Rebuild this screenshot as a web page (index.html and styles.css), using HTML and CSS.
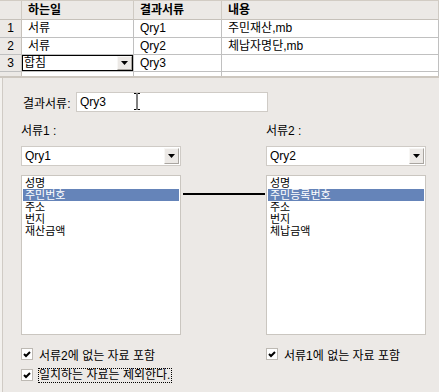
FILE: index.html
```html
<!DOCTYPE html>
<html lang="ko">
<head>
    <meta charset="UTF-8">
    <title>자료 합침</title>
    <link rel="stylesheet" href="styles.css">
</head>
<body>
    <div class="grid">
        <div class="hd"></div>
        <div class="hd">하는일</div>
        <div class="hd">결과서류</div>
        <div class="hd">내용</div>

        <div class="num">1</div>
        <div class="cell">서류</div>
        <div class="cell">Qry1</div>
        <div class="cell">주민재산,mb</div>

        <div class="num">2</div>
        <div class="cell">서류</div>
        <div class="cell">Qry2</div>
        <div class="cell">체납자명단,mb</div>

        <div class="num">3</div>
        <div class="cell edit">
            <div class="edit-box">
                <span class="edit-text">합침</span>
                <span class="drop-btn"><svg width="7" height="4" viewBox="0 0 7 4"><path d="M0 0h7L3.5 4z" fill="#000"/></svg></span>
            </div>
        </div>
        <div class="cell">Qry3</div>
        <div class="cell"></div>

        <div class="num tail"></div>
        <div class="cell tail"></div>
        <div class="cell tail"></div>
        <div class="cell tail"></div>
    </div>

    <div class="panel">
        <div class="result-row">
            <label class="result-label">결과서류:</label>
            <div class="text-box">Qry3</div>
            <!-- 마우스 커서 -->
            <svg class="ibeam" width="8" height="17" viewBox="0 0 8 17">
                <path d="M1 .5h2.5M4.5 .5H7M4 1v15M1 16.5h2.5M4.5 16.5H7" stroke="#000" fill="none"/>
            </svg>
        </div>

        <div class="pair">
            <div class="col-label">서류1 :</div>
            <div></div>
            <div class="col-label">서류2 :</div>

            <div class="combo">
                <span class="combo-text">Qry1</span>
                <span class="drop-btn"><svg width="7" height="4" viewBox="0 0 7 4"><path d="M0 0h7L3.5 4z" fill="#000"/></svg></span>
            </div>
            <div></div>
            <div class="combo">
                <span class="combo-text">Qry2</span>
                <span class="drop-btn"><svg width="7" height="4" viewBox="0 0 7 4"><path d="M0 0h7L3.5 4z" fill="#000"/></svg></span>
            </div>

            <ul class="listbox">
                <li>성명</li>
                <li class="selected">주민번호</li>
                <li>주소</li>
                <li>번지</li>
                <li>재산금액</li>
            </ul>
            <div class="link-line"></div>
            <ul class="listbox">
                <li>성명</li>
                <li class="selected">주민등록번호</li>
                <li>주소</li>
                <li>번지</li>
                <li>체납금액</li>
            </ul>
        </div>

        <div class="checks">
            <div class="check">
                <span class="box"><svg width="8" height="7" viewBox="0 0 8 7"><path d="M1 3l2 2 4-4" stroke="#000" stroke-width="2" fill="none"/></svg></span>
                <span>서류2에 없는 자료 포함</span>
            </div>
            <div></div>
            <div class="check">
                <span class="box"><svg width="8" height="7" viewBox="0 0 8 7"><path d="M1 3l2 2 4-4" stroke="#000" stroke-width="2" fill="none"/></svg></span>
                <span>서류1에 없는 자료 포함</span>
            </div>

            <div class="check">
                <span class="box"><svg width="8" height="7" viewBox="0 0 8 7"><path d="M1 3l2 2 4-4" stroke="#000" stroke-width="2" fill="none"/></svg></span>
                <span class="focused">일치하는 자료는 제외한다.</span>
            </div>
        </div>
    </div>
</body>
</html>
```

FILE: styles.css
```css
* {
    margin: 0;
    padding: 0;
    box-sizing: border-box;
}

body {
    font-family: "Liberation Sans", "Noto Sans CJK KR", sans-serif;
    font-size: 12px;
    color: #000;
    background-color: #f3f1ee;
    width: 439px;
    height: 392px;
    overflow: hidden;
}

/* 위쪽 표 */
.grid {
    display: grid;
    grid-template-columns: 22px 112px 88px 1fr;
    grid-template-rows: 19px 18px 17px 17px 4px;
    background: #fff;
    border-top: 1px solid #d2ccc4;
    border-bottom: 2px solid #cdc7bf;
}

.hd,
.num,
.cell {
    border-right: 1px solid #c0c0c0;
    border-bottom: 1px solid #c0c0c0;
    white-space: nowrap;
    overflow: hidden;
    line-height: 16px;
}

.hd {
    background: #ece9e6;
    border-bottom-color: #c6c1ba;
    border-right-color: #cfcac3;
    font-weight: bold;
    padding-left: 6px;
    line-height: 18px;
}

.num {
    background: #ece9e6;
    text-align: center;
    border-right-color: #c6c1ba;
}

.cell {
    padding-left: 6px;
}

.tail {
    border-bottom: none;
}

.cell.edit {
    padding: 0;
}

.edit-box {
    display: flex;
    height: 100%;
    border: 1px solid #000;
    background: #fff;
}

.edit-text {
    flex: 1;
    padding-left: 1px;
    line-height: 14px;
}

.drop-btn {
    display: flex;
    align-items: center;
    justify-content: center;
    width: 15px;
    background: #ece9e6;
    border: 1px solid;
    border-color: #f8f7f5 #a9a5a0 #a9a5a0 #f8f7f5;
}

/* 아래쪽 설정 영역 */
.panel {
    background: #ece9e6;
    margin-left: 2px;
    border-left: 1px solid #d0cbc5;
    height: 314px;
    padding: 14px 0 0 18px;
}

.result-row {
    position: relative;
    display: flex;
    align-items: center;
    gap: 2px;
}

.result-label {
    width: 51px;
    margin-left: 2px;
    white-space: nowrap;
}

.text-box {
    width: 192px;
    height: 20px;
    background: #fff;
    border: 1px solid #cfcbc6;
    padding-left: 3px;
    line-height: 18px;
}

.ibeam {
    position: absolute;
    left: 112px;
    top: 1px;
}

.pair {
    display: grid;
    grid-template-columns: 160px 85px 160px;
    margin-top: 12px;
}

.col-label {
    line-height: 14px;
    margin-bottom: 8px;
}

.combo {
    display: flex;
    height: 20px;
    background: #fff;
    border: 1px solid #cfcbc6;
    padding: 1px;
    margin-bottom: 9px;
}

.combo-text {
    flex: 1;
    padding-left: 2px;
    line-height: 16px;
}

.listbox {
    list-style: none;
    height: 160px;
    background: #fff;
    border: 1px solid #cac6c0;
    padding: 1px;
    font-size: 11px;
}

.listbox li {
    line-height: 12px;
    height: 12px;
    padding-left: 2px;
    white-space: nowrap;
}

.listbox li.selected {
    background: #6584b9;
    color: #fff;
}

.link-line {
    align-self: start;
    margin: 18px 0 0 2px;
    width: 82px;
    height: 2px;
    background: #000;
}

.checks {
    display: grid;
    grid-template-columns: 160px 85px 160px;
    grid-auto-rows: 16px;
    row-gap: 5px;
    margin-top: 11px;
}

.check {
    display: flex;
    align-items: center;
    white-space: nowrap;
}

.box {
    display: flex;
    align-items: center;
    justify-content: center;
    width: 12px;
    height: 12px;
    background: #fff;
    border: 1px solid #bdb9b3;
    margin-right: 6px;
}

.focused {
    border: 1px dotted #000;
    margin-left: -1px;
    padding: 0 1px 0 0;
    line-height: 13px;
}
```
